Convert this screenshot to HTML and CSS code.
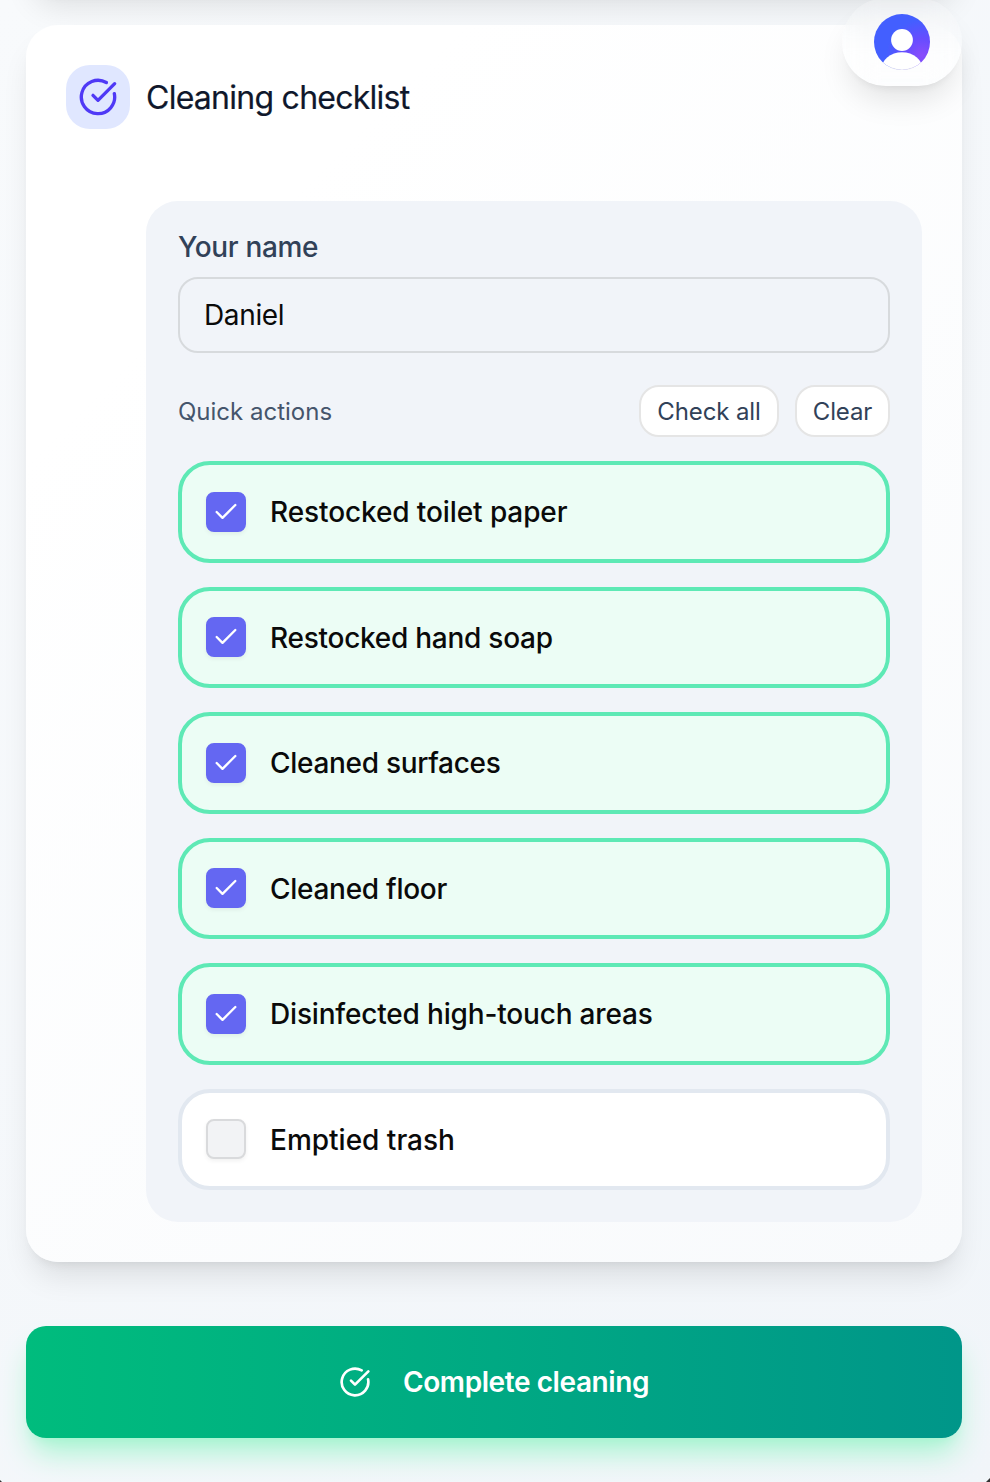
FILE: index.html
```html
<!DOCTYPE html>
<html lang="en">
<head>
<meta charset="utf-8">
<title>Cleaning checklist</title>
<link rel="stylesheet" href="styles.css">
</head>
<body>
<svg class="defs" width="0" height="0" aria-hidden="true">
  <symbol id="circle-check" viewBox="0 0 24 24"><path d="M21.801 10A10 10 0 1 1 17 3.335"/><path d="m9 11 3 3L22 4"/></symbol>
  <symbol id="check" viewBox="0 0 24 24"><path d="M20 6 9 17l-5-5"/></symbol>
</svg>
<div class="page">
  <section class="card previous"></section>

  <div class="account">
    <svg class="avatar" viewBox="0 0 56 56">
      <defs>
        <radialGradient id="glow" cx="0.86" cy="0.74" r="0.85">
          <stop offset="0" stop-color="#8a4dfb"/><stop offset="0.35" stop-color="#674cff"/><stop offset="0.75" stop-color="#435fff"/>
        </radialGradient>
        <clipPath id="disc"><circle cx="28" cy="28" r="28"/></clipPath>
      </defs>
      <g clip-path="url(#disc)">
        <rect width="56" height="56" fill="url(#glow)"/>
        <circle cx="28" cy="26" r="10.9" fill="#fff"/>
        <ellipse cx="28" cy="56" rx="21" ry="17.8" fill="#fff"/>
      </g>
      <path d="M16 53.2A28 28 0 0 0 40 53.2" fill="none" stroke="#e6e6ec" stroke-width="0.6"/>
    </svg>
  </div>

  <section class="card">
    <header class="card-head">
      <span class="badge"><svg class="badge-icon"><use href="#circle-check"/></svg></span>
      <h2 class="title">Cleaning checklist</h2>
    </header>
    <div class="panel">
      <label class="label" for="name">Your name</label>
      <input class="input" id="name" type="text" value="Daniel">
      <div class="actions">
        <span class="actions-label">Quick actions</span>
        <button class="pill check-all">Check all</button>
        <button class="pill clear">Clear</button>
      </div>
      <ul class="list">
        <li class="item done"><span class="box"><svg class="tick"><use href="#check"/></svg></span><span class="text t1">Restocked toilet paper</span></li>
        <li class="item done"><span class="box"><svg class="tick"><use href="#check"/></svg></span><span class="text t2">Restocked hand soap</span></li>
        <li class="item done"><span class="box"><svg class="tick"><use href="#check"/></svg></span><span class="text t3">Cleaned surfaces</span></li>
        <li class="item done"><span class="box"><svg class="tick"><use href="#check"/></svg></span><span class="text t4">Cleaned floor</span></li>
        <li class="item done"><span class="box"><svg class="tick"><use href="#check"/></svg></span><span class="text t5">Disinfected high-touch areas</span></li>
        <li class="item"><span class="box"></span><span class="text t6">Emptied trash</span></li>
      </ul>
    </div>
  </section>

  <button class="complete"><svg class="complete-icon"><use href="#circle-check"/></svg><span class="complete-text">Complete cleaning</span></button>
</div>
</body>
</html>
```

FILE: styles.css
```css
* { box-sizing: border-box; }
body {
  margin: 0;
  font-family: Inter, "Liberation Sans", sans-serif;
  color: #0a0a0a;
}
button, input { font: inherit; color: inherit; margin: 0; }
.defs { position: absolute; }
.page {
  height: 1482px;
  overflow: hidden;
  padding: 0 28px 0 26px;
  display: flex;
  flex-direction: column;
  position: relative;
  background: linear-gradient(135deg, #f8fafc, #f1f5f9);
}
.card {
  flex: none;
  padding: 40px;
  border-radius: 32px;
  background: linear-gradient(135deg, #fff 20%, #f8fafc);
  box-shadow: 0 20px 30px -6px rgba(0, 0, 0, .1), 0 8px 12px -8px rgba(0, 0, 0, .1);
}
.previous { height: 100px; margin-top: -107px; margin-bottom: 32px; }
.account {
  position: absolute;
  z-index: 2;
  top: -2px;
  right: 28px;
  width: 120px;
  height: 88px;
  border-radius: 44px;
  display: flex;
  align-items: center;
  justify-content: center;
  background: rgba(255, 255, 255, .1);
  backdrop-filter: blur(16px);
  box-shadow: 0 20px 30px -6px rgba(0, 0, 0, .1), 0 8px 12px -8px rgba(0, 0, 0, .1);
}
.avatar { width: 56px; height: 56px; }
.card-head { display: flex; align-items: center; gap: 16px; }
.badge {
  width: 64px;
  height: 64px;
  border-radius: 24px;
  display: grid;
  place-items: center;
  background: #e0e7ff;
}
svg { fill: none; stroke-linecap: round; stroke-linejoin: round; }
.badge-icon { width: 40px; height: 40px; stroke: #4f39f6; stroke-width: 2; }
.title { margin: 0; padding-top: 2px; font-size: 32px; line-height: 40px; font-weight: 400; letter-spacing: -.74px; color: #0f172b; -webkit-text-stroke: .2px; }
.panel {
  margin: 72px 0 0 80px;
  padding: 32px;
  border-radius: 32px;
  background: #f1f4f9;
}
.label { display: block; font-size: 28px; line-height: 28px; font-weight: 500; letter-spacing: -.33px; color: #314158; }
.input {
  display: block;
  width: 100%;
  height: 76px;
  margin: 16px 0 32px;
  padding: 0 24px;
  border: 2px solid #d7dadd;
  border-radius: 20px;
  background: transparent;
  font-size: 28px;
  letter-spacing: -.35px;
  outline: none;
}
.actions { display: flex; align-items: center; gap: 16px; height: 52px; margin-bottom: 24px; }
.actions-label { flex: 1; font-size: 24px; color: #45556c; }
.pill {
  height: 52px;
  padding: 0;
  border: 2px solid #e5e5e5;
  border-radius: 20px;
  background: #fff;
  font-size: 24px;
  letter-spacing: -.1px;
  color: #314158;
  white-space: nowrap;
}
.check-all { width: 140px; }
.clear { width: 95px; }
.list { list-style: none; margin: 0; padding: 0; display: grid; gap: 24px; }
.item {
  height: 101.5px;
  padding: 0 24px;
  display: flex;
  align-items: center;
  gap: 24px;
  border: 4px solid #e2e8f0;
  border-radius: 32px;
  background: #fff;
  font-size: 28px;
  font-weight: 500;
}
.item.done { border-color: #5ee9b5; background: #ecfdf5; }
.text { padding-top: 1px; }
.t1 { letter-spacing: -.1px; }
.t2 { letter-spacing: -.26px; }
.t3 { letter-spacing: -.3px; }
.t4 { letter-spacing: -.28px; }
.t5 { letter-spacing: -.18px; }
.box {
  width: 40px;
  height: 40px;
  border: 2px solid #d9dadc;
  border-radius: 8px;
  display: grid;
  place-items: center;
  background: #f2f3f5;
  box-shadow: 0 2px 4px rgba(0, 0, 0, .06);
}
.done .box { border-color: #6467f2; background: #6467f2; }
.tick { width: 28px; height: 28px; stroke: #fff; stroke-width: 2; }
.complete {
  flex: none;
  height: 112px;
  margin-top: 64px;
  padding: 0;
  border: 0;
  border-radius: 20px;
  display: flex;
  align-items: center;
  justify-content: center;
  gap: 32px;
  color: #fff;
  font-size: 28px;
  font-weight: 600;
  letter-spacing: -.42px;
  background: linear-gradient(to right, #00bc7d, #009689);
  box-shadow: 0 20px 30px -6px #a4f4cf, 0 8px 12px -8px #a4f4cf;
}
.complete-icon { width: 32px; height: 32px; stroke: currentColor; stroke-width: 2; }
.page::before, .page::after {
  content: "";
  position: absolute;
  bottom: 0;
  background: #333;
}
.page::before { left: 0; width: 2px; height: 2px; clip-path: polygon(0 0, 100% 100%, 0 100%); }
.page::after { right: 0; width: 4px; height: 4px; clip-path: polygon(100% 0, 100% 100%, 0 100%); }
```
